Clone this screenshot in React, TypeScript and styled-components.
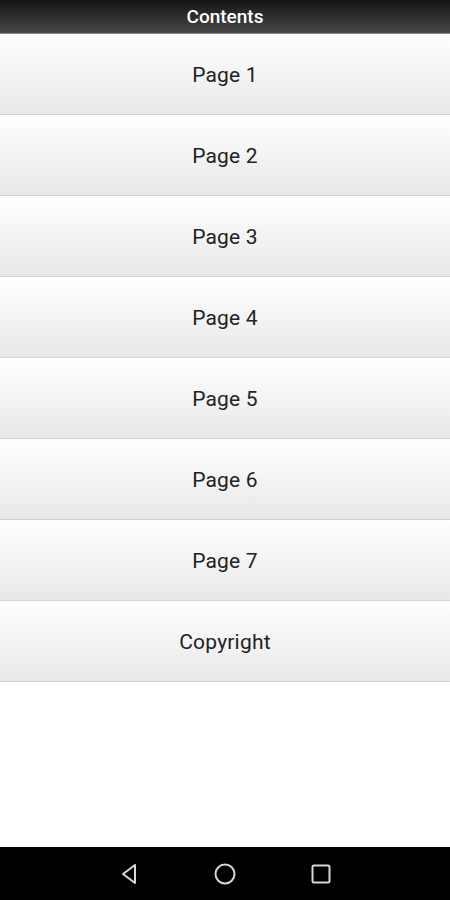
import React from "react";
import { createGlobalStyle, styled } from "styled-components";

const GlobalStyle = createGlobalStyle`
  html, body {
    margin: 0;
    padding: 0;
    background: #ffffff;
    font-family: Roboto, "Liberation Sans", sans-serif;
  }
`;

const Screen = styled.div`
  display: flex;
  flex-direction: column;
  width: 450px;
  height: 900px;
  overflow: hidden;
`;

const Header = styled.div`
  display: flex;
  align-items: center;
  justify-content: center;
  height: 33px;
  background: linear-gradient(#151515, #474747);
  border-bottom: 1px solid #8a8a8a;
  color: #ffffff;
  font-size: 19px;
  font-weight: 500;
`;

const List = styled.div`
  display: flex;
  flex-direction: column;
  flex: 1;
`;

const Row = styled.button`
  display: flex;
  align-items: center;
  justify-content: center;
  height: 81px;
  padding: 2px 0 0;
  border: none;
  border-bottom: 1px solid #d2d2d2;
  background: linear-gradient(#ffffff, #e8e8e8);
  color: #222222;
  font-family: inherit;
  font-size: 21px;
  letter-spacing: 0.2px;
  cursor: pointer;
`;

const NavBar = styled.div`
  display: flex;
  align-items: center;
  justify-content: center;
  gap: 72px;
  height: 53px;
  background: #000000;
`;

const NavIcon = styled.svg`
  width: 24px;
  height: 24px;
  fill: none;
  stroke: #d8d8d8;
  stroke-width: 2;
  stroke-linejoin: round;
`;

const items = ["Page 1", "Page 2", "Page 3", "Page 4", "Page 5", "Page 6", "Page 7", "Copyright"];

export default function App() {
  return (
    <Screen>
      <GlobalStyle />
      <Header>Contents</Header>
      <List>
        {items.map((label) => (
          <Row key={label}>{label}</Row>
        ))}
      </List>
      <NavBar>
        <NavIcon viewBox="0 0 24 24">
          <path d="M18 3 L6 12 L18 21 Z" />
        </NavIcon>
        <NavIcon viewBox="0 0 24 24">
          <circle cx="12" cy="12" r="9.5" />
        </NavIcon>
        <NavIcon viewBox="0 0 24 24">
          <rect x="3.5" y="3.5" width="17" height="17" rx="1.5" />
        </NavIcon>
      </NavBar>
    </Screen>
  );
}
